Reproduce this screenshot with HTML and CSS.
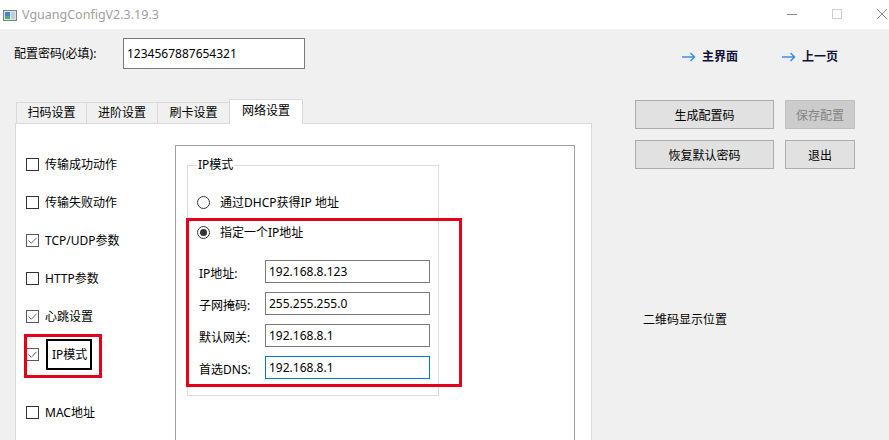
FILE: index.html
```html
<!DOCTYPE html>
<html lang="zh-CN">
<head>
    <meta charset="UTF-8">
    <title>VguangConfigV2.3.19.3</title>
    <link rel="stylesheet" href="styles.css">
</head>
<body>
    <div class="window">
        <div class="titlebar">
            <svg class="app-icon" width="14" height="11" viewBox="0 0 14 11">
                <rect x="0.5" y="0.5" width="13" height="10" fill="#dfe4ea" stroke="#71839a"/>
                <rect x="2" y="2" width="5" height="7" fill="#3f86c8"/>
                <rect x="2" y="6" width="5" height="3" fill="#4fae6a"/>
                <rect x="8" y="2" width="4" height="7" fill="#c4ccd6"/>
            </svg>
            <span class="title">VguangConfigV2.3.19.3</span>
            <div class="win-controls">
                <span class="ctl">
                    <svg width="10" height="10" viewBox="0 0 10 10"><path d="M0 5.5H10" stroke="#8a8a8a"/></svg>
                </span>
                <span class="ctl">
                    <svg width="10" height="10" viewBox="0 0 10 10"><rect x="0.5" y="0.5" width="9" height="9" fill="none" stroke="#cfcfcf"/></svg>
                </span>
                <span class="ctl">
                    <svg width="10" height="10" viewBox="0 0 10 10"><path d="M0 0L10 10M10 0L0 10" stroke="#8a8a8a"/></svg>
                </span>
            </div>
        </div>

        <div class="header">
            <label class="pwd-label">配置密码(必填):</label>
            <input class="pwd-input" type="text" value="1234567887654321">
            <nav class="nav">
                <a class="nav-link">
                    <svg width="14" height="10" viewBox="0 0 14 10"><path d="M0 5H12.5M8.5 1L12.5 5L8.5 9" fill="none" stroke="#3c8fe2" stroke-width="1.5"/></svg>
                    主界面
                </a>
                <a class="nav-link">
                    <svg width="14" height="10" viewBox="0 0 14 10"><path d="M0 5H12.5M8.5 1L12.5 5L8.5 9" fill="none" stroke="#3c8fe2" stroke-width="1.5"/></svg>
                    上一页
                </a>
            </nav>
        </div>

        <div class="content">
            <div class="tabs">
                <div class="tab-bar">
                    <div class="tab">扫码设置</div>
                    <div class="tab">进阶设置</div>
                    <div class="tab">刷卡设置</div>
                    <div class="tab active">网络设置</div>
                </div>
                <div class="tab-pane">
                    <ul class="options">
                        <li class="option"><span class="box"></span>传输成功动作</li>
                        <li class="option"><span class="box"></span>传输失败动作</li>
                        <li class="option"><span class="box checked"><svg width="11" height="11" viewBox="0 0 11 11"><path d="M1.5 5.5L4.3 8.3L9.5 2.8" fill="none" stroke="#666"/></svg></span>TCP/UDP参数</li>
                        <li class="option"><span class="box"></span>HTTP参数</li>
                        <li class="option"><span class="box checked"><svg width="11" height="11" viewBox="0 0 11 11"><path d="M1.5 5.5L4.3 8.3L9.5 2.8" fill="none" stroke="#666"/></svg></span>心跳设置</li>
                        <li class="option"><span class="box checked"><svg width="11" height="11" viewBox="0 0 11 11"><path d="M1.5 5.5L4.3 8.3L9.5 2.8" fill="none" stroke="#666"/></svg></span><span class="focused">IP模式</span></li>
                        <li class="option option-gap"><span class="box"></span>MAC地址</li>
                    </ul>
                    <div class="panel">
                        <fieldset class="group">
                            <legend>IP模式</legend>
                            <div class="radio-row first"><span class="radio"></span>通过DHCP获得IP 地址</div>
                            <div class="radio-row"><span class="radio on"></span>指定一个IP地址</div>
                            <div class="fields">
                                <div class="field"><label>IP地址:</label><input type="text" value="192.168.8.123"></div>
                                <div class="field"><label>子网掩码:</label><input type="text" value="255.255.255.0"></div>
                                <div class="field"><label>默认网关:</label><input type="text" value="192.168.8.1"></div>
                                <div class="field"><label>首选DNS:</label><input class="focus" type="text" value="192.168.8.1"></div>
                            </div>
                        </fieldset>
                    </div>
                </div>
            </div>

            <div class="side">
                <div class="buttons">
                    <button class="btn">生成配置码</button>
                    <button class="btn disabled">保存配置</button>
                    <button class="btn">恢复默认密码</button>
                    <button class="btn">退出</button>
                </div>
                <div class="qr-hint">二维码显示位置</div>
            </div>
        </div>

        <!-- red annotation frames -->
        <div class="mark mark-option"></div>
        <div class="mark mark-group"></div>
    </div>
</body>
</html>
```

FILE: styles.css
```css
:root {
    --bg: #f0f0f0;
    --pane-border: #d9d9d9;
    --panel-border: #a0a0a0;
    --input-border: #7a7a7a;
    --mark: #e4001b;
}

* {
    box-sizing: border-box;
}

body {
    margin: 0;
    font-family: "Noto Sans", "Noto Sans CJK SC", sans-serif;
    font-size: 12px;
    color: #000;
    background-color: var(--bg);
    overflow: hidden;
}

.window {
    position: relative;
    width: 889px;
    height: 440px;
    overflow: hidden;
}

/* title bar */
.titlebar {
    height: 29px;
    background-color: #fff;
    display: flex;
    align-items: center;
    padding-left: 3px;
}

.app-icon {
    display: block;
    margin-top: 1px;
}

.title {
    margin-left: 5px;
    color: #a0a0a0;
    font-size: 12.5px;
    line-height: 16px;
}

.win-controls {
    margin-left: auto;
    margin-right: -15px;
    display: flex;
}

.ctl {
    width: 45px;
    height: 29px;
    display: flex;
    align-items: center;
    justify-content: center;
}

.ctl svg {
    display: block;
    margin-top: -2px;
}

/* password + nav */
.header {
    height: 70px;
    display: flex;
    align-items: flex-start;
    padding: 9px 0 0 14px;
}

.pwd-label {
    width: 109px;
    line-height: 31px;
}

.pwd-input {
    width: 182px;
    height: 31px;
    border: 1px solid var(--input-border);
    background: #fff;
    padding: 0 0 0 3px;
    font: inherit;
    font-size: 12px;
    outline: none;
}

.nav {
    display: flex;
    margin: 9px 0 0 377px;
}

.nav-link {
    width: 100px;
    display: flex;
    align-items: center;
    gap: 6px;
    line-height: 20px;
    font-weight: bold;
    color: #10103a;
}

/* tabs */
.content {
    display: flex;
}

.tabs {
    margin-left: 15px;
    width: 577px;
}

.tab-bar {
    height: 24px;
    display: flex;
    align-items: flex-end;
    padding-left: 1px;
}

.tab {
    height: 21px;
    line-height: 20px;
    border: 1px solid var(--pane-border);
    border-bottom: none;
    margin-right: -1px;
    text-align: center;
    background-color: var(--bg);
}

.tab:nth-child(1) { width: 71px; }
.tab:nth-child(2) { width: 72px; }
.tab:nth-child(3) { width: 73px; }

.tab.active {
    width: 74px;
    height: 25px;
    margin-bottom: -1px;
    line-height: 22px;
    background-color: #fff;
    position: relative;
    z-index: 1;
}

.tab-pane {
    height: 330px;
    border: 1px solid var(--pane-border);
    background-color: #fff;
    display: flex;
}

.options {
    list-style: none;
    margin: 21px 0 0;
    padding: 0 0 0 10px;
    width: 159px;
}

.option {
    height: 38px;
    display: flex;
    align-items: center;
}

.option-gap {
    margin-top: 20px;
}

.box {
    width: 13px;
    height: 13px;
    border: 1px solid #333;
    margin-right: 6px;
    display: flex;
    align-items: center;
    justify-content: center;
}

.box.checked {
    border-color: #5a5a5a;
}

.focused {
    height: 31px;
    line-height: 27px;
    border: 2px solid #000;
    padding: 0 3px 0 4px;
    margin-left: 1px;
}

.panel {
    width: 400px;
    margin-top: 21px;
    border: 1px solid var(--panel-border);
    border-bottom: none;
}

.group {
    width: 252px;
    margin: 11px 0 0 11px;
    padding: 0 0 16px 9px;
    border: 1px solid #dcdcdc;
}

.group legend {
    padding: 0 1px;
    line-height: 16px;
    color: #000;
}

.radio-row {
    height: 20px;
    margin-top: 10px;
    display: flex;
    align-items: center;
}

.radio-row.first {
    margin-top: 19px;
}

.radio {
    width: 13px;
    height: 13px;
    border: 1px solid #333;
    border-radius: 50%;
    margin-right: 10px;
    display: flex;
    align-items: center;
    justify-content: center;
}

.radio.on::after {
    content: "";
    width: 7px;
    height: 7px;
    border-radius: 50%;
    background-color: #333;
}

.fields {
    margin-top: 18px;
    padding-left: 2px;
    display: flex;
    flex-direction: column;
    gap: 9px;
}

.field {
    display: flex;
    align-items: center;
    height: 23px;
}

.field label {
    width: 66px;
    padding-top: 2px;
}

.field input {
    width: 165px;
    height: 23px;
    border: 1px solid var(--input-border);
    padding: 0 0 0 3px;
    font: inherit;
    font-size: 12px;
    outline: none;
}

.field input.focus {
    border-color: #0078d7;
}

/* right column */
.side {
    margin-left: 43px;
    padding-top: 1px;
}

.buttons {
    display: grid;
    grid-template-columns: 139px 70px;
    grid-auto-rows: 29px;
    gap: 11px;
}

.btn {
    font: inherit;
    font-size: 12px;
    color: #000;
    background-color: #e1e1e1;
    border: 1px solid #adadad;
    padding: 0;
}

.btn.disabled {
    background-color: #cccccc;
    border-color: #bfbfbf;
    color: #838383;
}

.qr-hint {
    margin: 143px 0 0 8px;
    line-height: 16px;
}

/* annotation frames drawn over the form */
.mark {
    position: absolute;
    border: 3px solid var(--mark);
    pointer-events: none;
}

.mark-option {
    left: 24px;
    top: 334px;
    width: 78px;
    height: 44px;
}

.mark-group {
    left: 186px;
    top: 218px;
    width: 276px;
    height: 169px;
}
```
